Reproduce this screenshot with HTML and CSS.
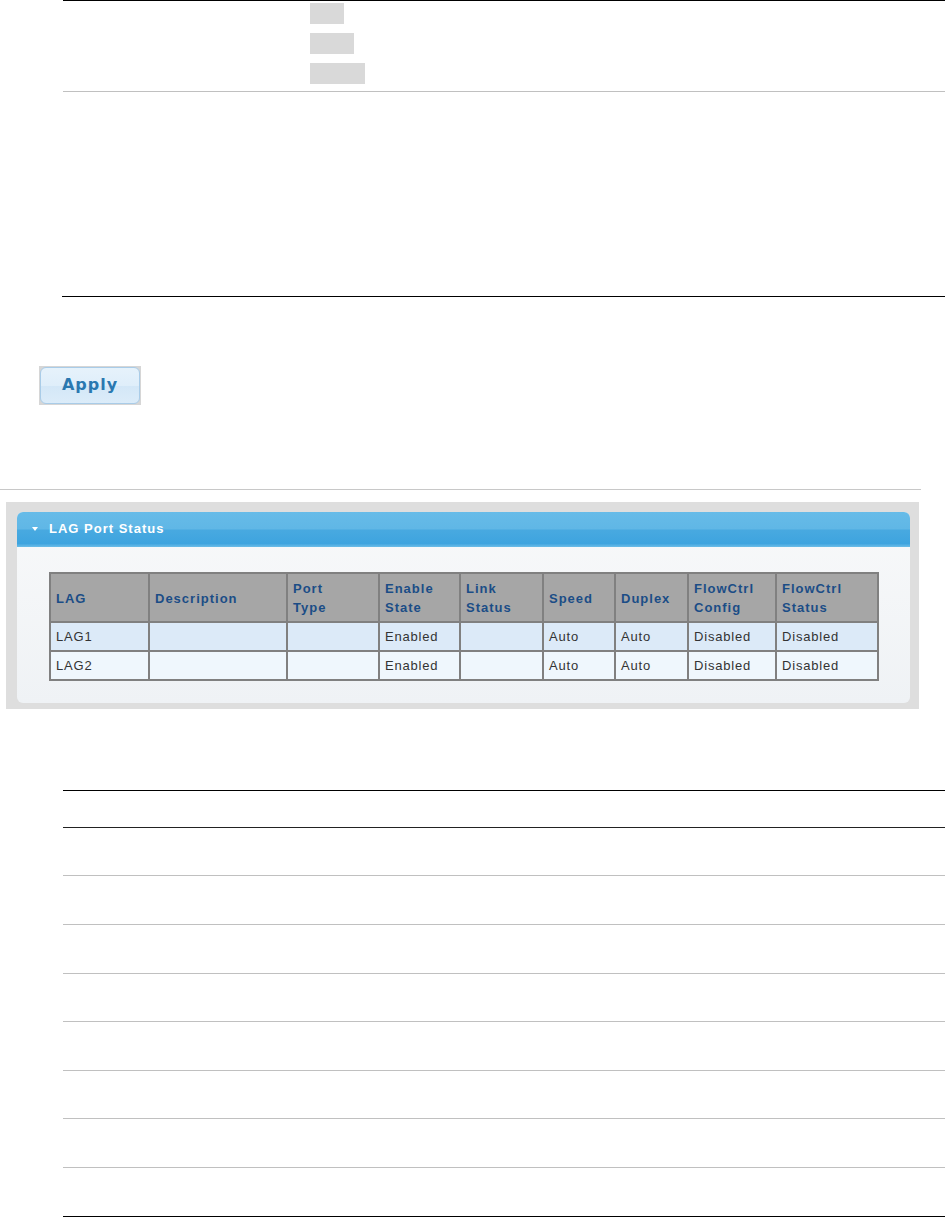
FILE: index.html
```html
<!DOCTYPE html>
<html>
<head>
<meta charset="utf-8">
<link rel="stylesheet" href="styles.css">
</head>
<body>
<div class="sec-top">
  <div class="opt o1"></div>
  <div class="opt o2"></div>
  <div class="opt o3"></div>
</div>
<div class="sec-mid"></div>

<div class="btn-wrap"><button class="apply">Apply</button></div>

<div class="sep"></div>

<div class="panel">
  <div class="panel-inner">
    <div class="panel-head"><span class="tri"></span>LAG Port Status</div>
    <div class="panel-body">
      <table class="grid">
        <colgroup>
          <col style="width:99px"><col style="width:138px"><col style="width:92px"><col style="width:81px"><col style="width:83px"><col style="width:72px"><col style="width:73px"><col style="width:88px"><col style="width:102px">
        </colgroup>
        <thead>
          <tr><th>LAG</th><th>Description</th><th>Port<br>Type</th><th>Enable<br>State</th><th>Link<br>Status</th><th>Speed</th><th>Duplex</th><th>FlowCtrl<br>Config</th><th>FlowCtrl<br>Status</th></tr>
        </thead>
        <tbody>
          <tr class="odd"><td>LAG1</td><td></td><td></td><td>Enabled</td><td></td><td>Auto</td><td>Auto</td><td>Disabled</td><td>Disabled</td></tr>
          <tr class="even"><td>LAG2</td><td></td><td></td><td>Enabled</td><td></td><td>Auto</td><td>Auto</td><td>Disabled</td><td>Disabled</td></tr>
        </tbody>
      </table>
    </div>
  </div>
</div>

<div class="sec-bottom">
  <div class="row head"></div>
  <div class="row r47"></div>
  <div class="row r48"></div>
  <div class="row r48"></div>
  <div class="row r47"></div>
  <div class="row r48"></div>
  <div class="row r47"></div>
  <div class="row r48"></div>
  <div class="row r48 last"></div>
</div>
</body>
</html>
```
FILE: styles.css
```css
html, body {
  margin: 0;
  padding: 0;
  background: #fff;
  font-family: "Liberation Sans", Arial, sans-serif;
}

.sec-top {
  margin-left: 63px;
  border-top: 1px solid #000;
  border-bottom: 1px solid #c0c0c0;
  padding: 2px 0 7px 247px;
  display: flex;
  flex-direction: column;
  gap: 9px;
}
.opt {
  height: 21px;
  background: #d9d9d9;
}
.o1 { width: 34px; }
.o2 { width: 44px; }
.o3 { width: 55px; }

.sec-mid {
  margin-left: 62px;
  height: 204px;
  border-bottom: 1px solid #000;
}

.btn-wrap {
  margin-top: 69px;
  margin-left: 39px;
  width: 102px;
  height: 39px;
  background: #d6d6d6;
  padding: 1px;
  box-sizing: border-box;
}
.apply {
  display: block;
  width: 100%;
  height: 100%;
  margin: 0;
  border: 1px solid #a9cce8;
  border-radius: 6px;
  background: linear-gradient(#e6f2fb 0%, #dfeefa 50%, #d3e7f7 52%, #dcecf9 100%);
  color: #2a78b0;
  font-family: "DejaVu Sans", Verdana, sans-serif;
  font-weight: bold;
  font-size: 16px;
  letter-spacing: 1px;
  padding: 0;
  padding-bottom: 2px;
}

.sep {
  margin-top: 84px;
  width: 921px;
  height: 1px;
  background: #c8c8c8;
}

.panel {
  margin-top: 12px;
  margin-left: 6px;
  width: 913px;
  box-sizing: border-box;
  background: #dedede;
  padding: 10px 9px 6px 11px;
}
.panel-inner {
  border-radius: 6px;
  background: linear-gradient(#f8f9fa, #eff2f5);
  overflow: hidden;
}
.panel-head {
  height: 35px;
  box-sizing: border-box;
  background: linear-gradient(#66bbe8 0%, #60b7e6 48%, #48a9e0 52%, #3ea4df 90%, #6cbde8 100%);
  color: #fff;
  font-weight: bold;
  font-size: 13px;
  letter-spacing: 1px;
  display: flex;
  align-items: center;
  padding-left: 15px;
  padding-bottom: 2px;
}
.tri {
  width: 0;
  height: 0;
  border-left: 3px solid transparent;
  border-right: 3px solid transparent;
  border-top: 4px solid #fff;
  margin-right: 11px;
  margin-top: 1px;
}
.panel-body {
  padding: 25px 0 22px 32px;
}

.grid {
  border-collapse: collapse;
  table-layout: fixed;
  width: 828px;
  border: 2px solid #808080;
  font-size: 13px;
}
.grid th, .grid td {
  border: 2px solid #808080;
  text-align: left;
  padding: 0 5px;
  vertical-align: middle;
}
.grid th {
  background: #a6a6a6;
  color: #1b4d86;
  font-weight: bold;
  letter-spacing: 1px;
  height: 46px;
  line-height: 19px;
  padding-top: 1px;
}
.grid td {
  color: #333;
  letter-spacing: 0.8px;
  height: 27px;
}
.grid tr.odd td { background: #dceaf8; }
.grid tr.even td { background: #eff7fd; }

.sec-bottom {
  margin-top: 81px;
  margin-left: 63px;
  border-top: 1px solid #000;
}
.row {
  border-bottom: 1px solid #c0c0c0;
}
.row.head {
  height: 36px;
  border-bottom-color: #222;
}
.r47 { height: 47px; }
.r48 { height: 48px; }
.row.last { border-bottom-color: #000; }
```
